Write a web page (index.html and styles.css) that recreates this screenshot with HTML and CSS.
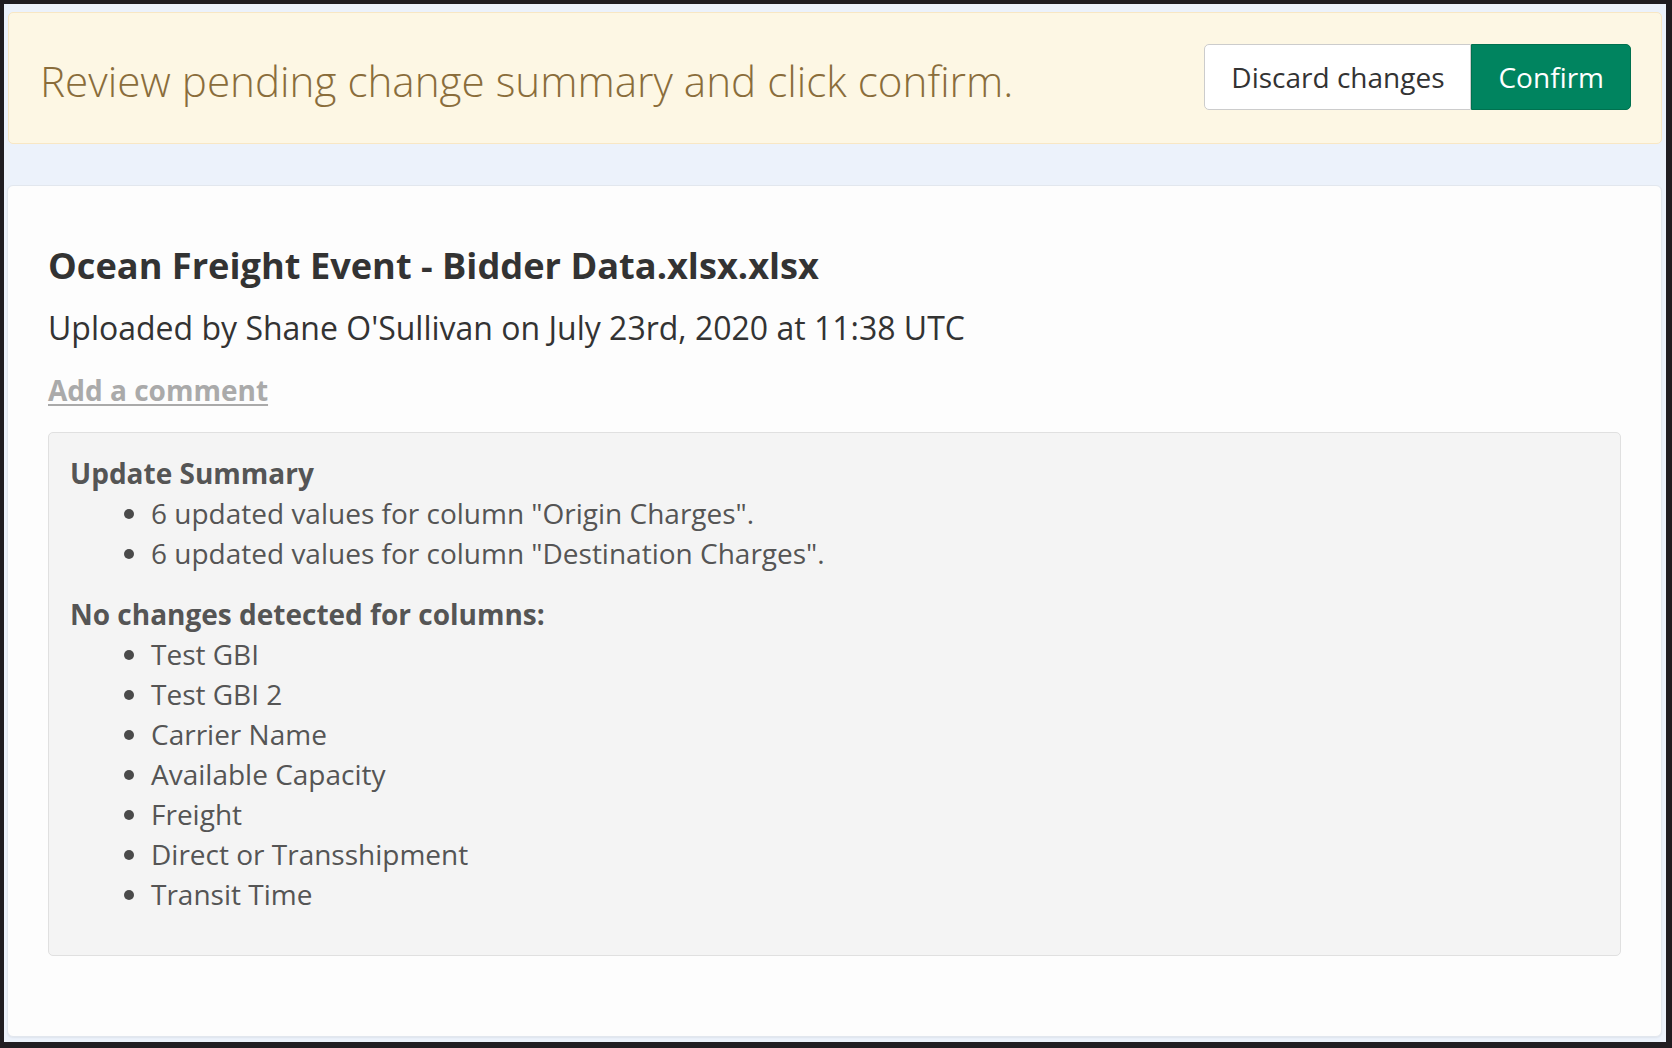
FILE: index.html
```html
<!DOCTYPE html>
<html lang="en">
<head>
<meta charset="utf-8">
<title>Review pending changes</title>
<link rel="stylesheet" href="styles.css">
</head>
<body>
<div class="frame">
  <div class="banner">
    <div class="banner-text">Review pending change summary and click confirm.</div>
    <div class="btn-group">
      <button class="btn btn-default">Discard changes</button>
      <button class="btn btn-primary">Confirm</button>
    </div>
  </div>
  <div class="card">
    <h1 class="title">Ocean Freight Event - Bidder Data.xlsx.xlsx</h1>
    <p class="meta">Uploaded by Shane O'Sullivan on July 23rd, 2020 at 11:38 UTC</p>
    <a class="comment-link" href="#">Add a comment</a>
    <div class="summary">
      <div class="summary-heading">Update Summary</div>
      <ul class="summary-list">
        <li>6 updated values for column "Origin Charges".</li>
        <li>6 updated values for column "Destination Charges".</li>
      </ul>
      <div class="summary-heading">No changes detected for columns:</div>
      <ul class="summary-list">
        <li>Test GBI</li>
        <li>Test GBI 2</li>
        <li>Carrier Name</li>
        <li>Available Capacity</li>
        <li>Freight</li>
        <li>Direct or Transshipment</li>
        <li>Transit Time</li>
      </ul>
    </div>
  </div>
</div>
</body>
</html>
```
FILE: styles.css
```css
* { box-sizing: border-box; }

html, body {
  margin: 0;
  padding: 0;
  height: 100%;
  background: #201d21;
}

body {
  font-family: "Open Sans", "Liberation Sans", sans-serif;
  color: #333;
}

.frame {
  margin: 4px 6px 6px 4px;
  height: calc(100vh - 10px);
  background: #ecf2fb;
  padding: 8px 4px 5px 3px;
  display: flex;
  flex-direction: column;
  gap: 41px;
}

.banner {
  margin-left: 1px;
  height: 132px;
  flex: 0 0 auto;
  background: #fdf7e4;
  border: 1px solid #f8e7c4;
  border-radius: 5px;
  display: flex;
  align-items: center;
  justify-content: space-between;
  padding: 0 30px 0 31px;
}

.banner-text {
  font-size: 42.2px;
  font-weight: 300;
  color: #8a6d3b;
  line-height: 1.2;
  padding-top: 6px;
}

.btn-group {
  display: flex;
  margin-top: -2px;
}

.btn {
  font-family: "Open Sans", "Liberation Sans", sans-serif;
  font-size: 28px;
  line-height: 38px;
  height: 66px;
  padding: 0 26px;
  border: 1px solid #ccc;
  cursor: pointer;
}

.btn-default {
  background: #fff;
  color: #333;
  border-radius: 5px 0 0 5px;
}

.btn-primary {
  background: #00845f;
  border-color: #00714f;
  color: #fff;
  border-radius: 0 5px 5px 0;
}

.card {
  flex: 1 1 auto;
  background: #fdfdfd;
  border: 1px solid #e2e7ee;
  border-radius: 6px;
  box-shadow: 0 1px 2px rgba(0, 0, 0, 0.06);
  padding: 57px 40px 0 40px;
}

.title {
  margin: 0;
  font-size: 36.2px;
  font-weight: 700;
  line-height: 44px;
  color: #333;
}

.meta {
  margin: 22px 0 0;
  font-size: 32px;
  line-height: 38px;
  color: #333;
}

.comment-link {
  display: block;
  margin-top: 26px;
  font-size: 28px;
  font-weight: 700;
  line-height: 34px;
  color: #aaa;
  text-decoration: underline;
  text-underline-offset: 3px;
  width: max-content;
}

.summary {
  margin-top: 25px;
  background: #f4f4f4;
  border: 1px solid #e0e0e0;
  border-radius: 5px;
  padding: 20px 21px 20px 21px;
  color: #555;
  font-size: 28px;
  line-height: 40px;
}

.summary-heading {
  font-weight: 700;
}

.summary-list {
  margin: 0 0 21px;
  padding-left: 81px;
}

.summary-list li::marker {
  color: #4a4a4a;
}
```
